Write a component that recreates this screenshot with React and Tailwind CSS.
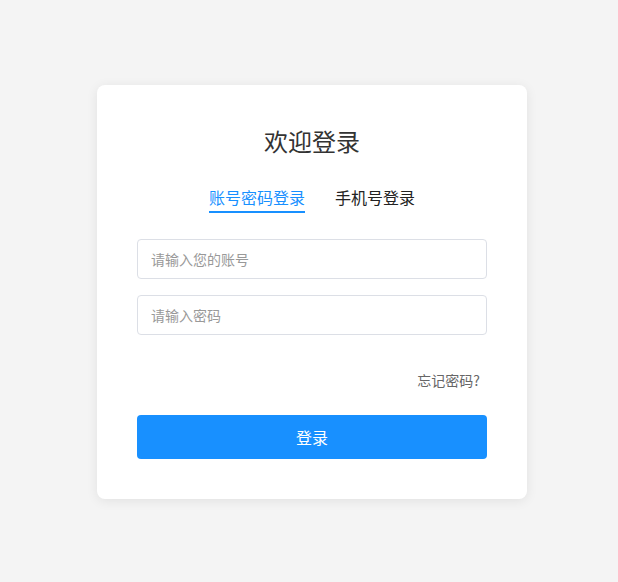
import React, { useState } from "react";

const App = () => {
  const [tab, setTab] = useState("account");

  return (
    <div
      className="min-h-screen bg-[#f4f4f4] flex justify-center pt-[85px] pl-[6px]"
      style={{ fontFamily: '"Noto Sans CJK SC", "Noto Sans", sans-serif' }}
    >
      <div className="w-[430px] h-[414px] bg-white rounded-lg shadow-[0_2px_12px_rgba(0,0,0,0.08)] px-10 pt-10 pb-10 flex flex-col">
        {/* Title */}
        <h1 className="text-[24px] leading-8 text-center text-[#333]">欢迎登录</h1>

        {/* Tabs */}
        <div className="flex justify-center gap-[30px] mt-7">
          <button
            onClick={() => setTab("account")}
            className={`text-[16px] leading-6 pb-[2px] border-b-2 ${
              tab === "account" ? "text-[#1890ff] border-[#1890ff]" : "text-[#222] border-transparent"
            }`}
          >
            账号密码登录
          </button>
          <button
            onClick={() => setTab("phone")}
            className={`text-[16px] leading-6 pb-[2px] border-b-2 ${
              tab === "phone" ? "text-[#1890ff] border-[#1890ff]" : "text-[#222] border-transparent"
            }`}
          >
            手机号登录
          </button>
        </div>

        {/* Inputs */}
        <div className="flex flex-col gap-4 mt-[26px]">
          <input
            type="text"
            placeholder="请输入您的账号"
            className="h-10 w-full border border-[#dcdfe6] rounded px-[13px] text-[14px] text-[#333] placeholder:text-[#999] outline-none"
          />
          <input
            type="password"
            placeholder="请输入密码"
            className="h-10 w-full border border-[#dcdfe6] rounded px-[13px] text-[14px] text-[#333] placeholder:text-[#999] outline-none"
          />
        </div>

        {/* Forgot */}
        <div className="flex justify-end mt-[35px] pr-[7px]">
          <a className="text-[14px] leading-5 text-[#666] cursor-pointer">忘记密码?</a>
        </div>

        {/* Submit */}
        <button className="mt-[25px] h-11 w-full bg-[#1890ff] rounded text-white text-[16px]">
          登录
        </button>
      </div>
    </div>
  );
};

export default App;
